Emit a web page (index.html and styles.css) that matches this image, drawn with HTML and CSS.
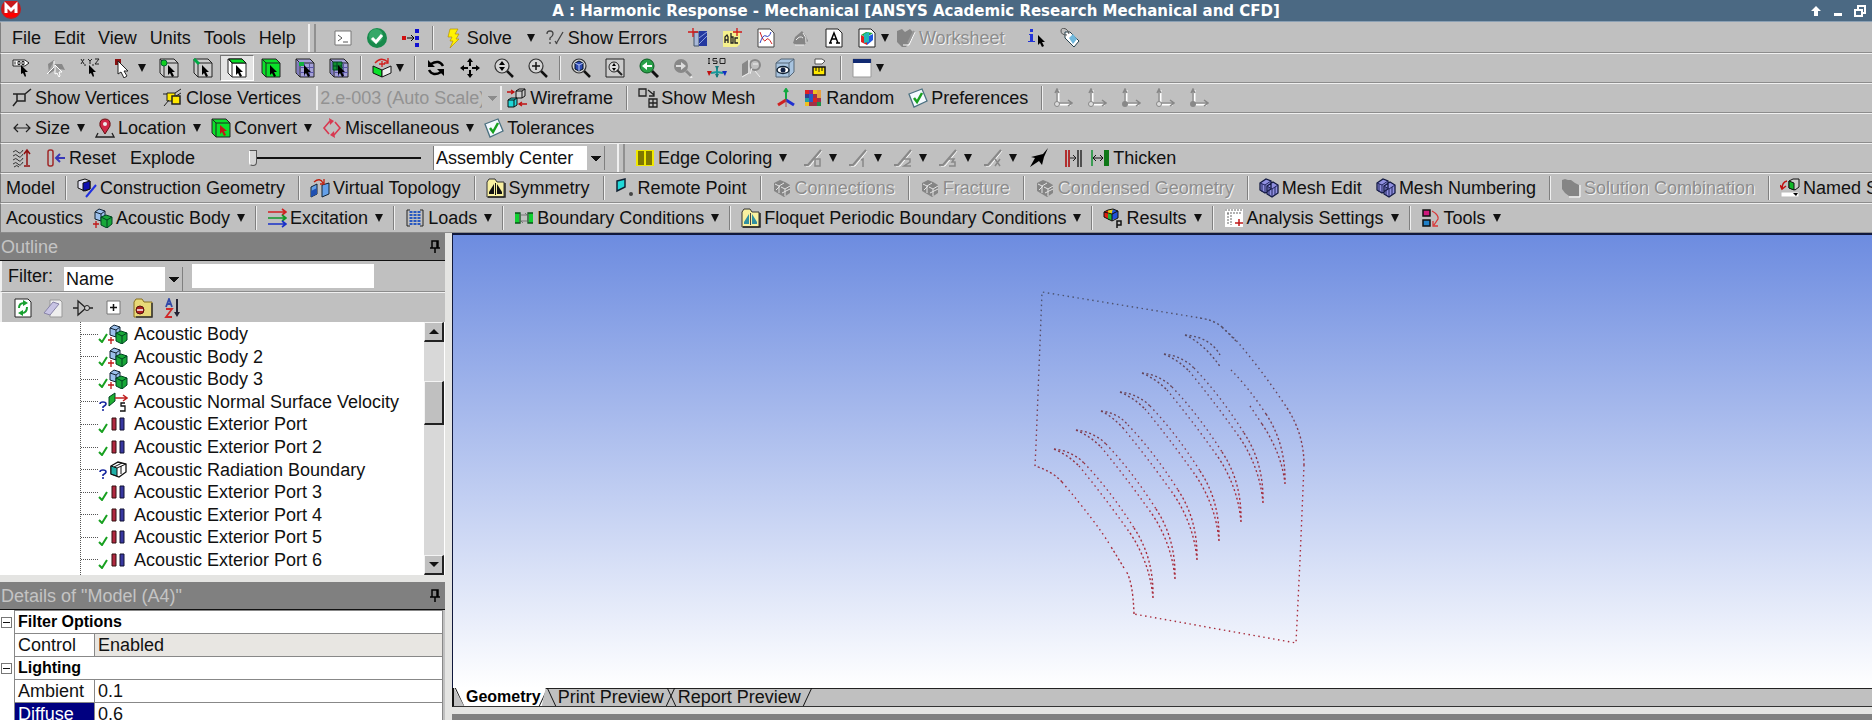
FILE: index.html
```html
<!DOCTYPE html>
<html lang="en">
<head>
    <meta charset="UTF-8">
    <meta name="viewport" content="width=device-width, initial-scale=1.0">
    <title>A : Harmonic Response - Mechanical</title>
    <link rel="stylesheet" href="styles.css">
</head>
<body>
    <!-- Icon definitions -->
    <svg class="defs" aria-hidden="true">
        <symbol id="cursor" viewBox="0 0 20 20"><path d="M9 7v10l2-2 2 4 2-1-2-4h3z" fill="#000"/></symbol>
        <symbol id="logo" viewBox="0 0 22 20"><circle cx="11" cy="8" r="10" fill="#c8191b"/><path d="M4 12h14l-2 4h-10z" fill="#f00"/><path d="M6 12V4l5 5 5-5v8" fill="none" stroke="#fff" stroke-width="3"/></symbol>
        <symbol id="console" viewBox="0 0 20 20"><path d="M2 3h16v14H2z" fill="#fff" stroke="#777"/><path d="M5 7l4 3-4 3M10 14h5" fill="none" stroke="#555"/></symbol>
        <symbol id="ok" viewBox="0 0 20 20"><circle cx="10" cy="10" r="10" fill="#188a4c"/><circle cx="9" cy="8" r="7" fill="#35a868"/><path d="M5 10l4 4 6-7" fill="none" stroke="#fff" stroke-width="3"/></symbol>
        <symbol id="branch" viewBox="0 0 20 20"><path d="M1 8h4v4H1z" fill="#d01010"/><path d="M14 1h4v4h-4zM14 8h4v4h-4zM14 15h4v4h-4z" fill="#1010d0"/><path d="M6 10h6M10 7l3 3-3 3" fill="none" stroke="#000"/></symbol>
        <symbol id="bolt" viewBox="0 0 20 20"><path d="M6 1h8l-3 5h4l-3 5h3L6 20l3-7H6l2-4H4z" fill="#fff200" stroke="#b89000" stroke-width=".7"/></symbol>
        <symbol id="errors" viewBox="0 0 20 20"><path d="M2 6q0-3 3-3t3 3q0 2-3 4v2M5 14v2M11 16l7-12M10 13l2 3" fill="none" stroke="#444" stroke-width="1.3"/></symbol>
        <symbol id="section" viewBox="0 0 20 20"><path d="M6 4h5v14H6z" fill="#a8b8d8" stroke="#456"/><path d="M11 3h8v15h-8z" fill="#2438a0"/><path d="M11 10l8-6M11 16l8-8" stroke="#8aa0e0"/><path d="M5 0v9M0 4h10" stroke="#d01818" stroke-width="1.3"/></symbol>
        <symbol id="note" viewBox="0 0 20 20"><path d="M1 3h17v13l-3 3H1z" fill="#f5f08c"/><path d="M3 15V9l2-2 1 2v6M3 12h3M9 5v10h2V9H9M16 10h-3v5h3" fill="none" stroke="#222" stroke-width="1.300"/><path d="M15 0v8M11 4h9" stroke="#d01818" stroke-width="1.300"/></symbol>
        <symbol id="chart" viewBox="0 0 20 20"><path d="M2 1h12l4 4v14H2z" fill="#fff" stroke="#444"/><path d="M4 4q4 12 6 8t6 4" fill="none" stroke="#d02020"/><path d="M4 15q3-9 6-7t5-4" fill="none" stroke="#3040c0"/></symbol>
        <symbol id="greyrock" viewBox="0 0 20 20"><path d="M3 15L5 9l7-6 4 5 2 5-4 4H6z" fill="#858585"/><path d="M6 12q4-5 7-2M13 5q4 4 3 10M5 17h9" fill="none" stroke="#eee"/></symbol>
        <symbol id="lettera" viewBox="0 0 20 20"><path d="M2 1h12l4 4v14H2z" fill="#fff" stroke="#222"/><path d="M5 15h3M12 15h4M6 15l4-10 4 10M8 11h5" fill="none" stroke="#000" stroke-width="1.500"/></symbol>
        <symbol id="colorpage" viewBox="0 0 20 20"><path d="M2 1h12l4 4v14H2z" fill="#fff" stroke="#222"/><path d="M4 7l6 3v7l-6-3z" fill="#e02020"/><path d="M4 7l5-3 7 1-6 4z" fill="#20a840"/><path d="M10 9l6-3v6l-6 5z" fill="#2058e0"/><path d="M7 6l5-2v10l-5 1z" fill="#20b8b8"/></symbol>
        <symbol id="sheet" viewBox="0 0 20 20"><path d="M1 3l5-2 3 3 5-3 3 3-2 8-5 7H6l-5-5z" fill="#858585"/><path d="M19 4l-6 13H7" fill="none" stroke="#fff"/><path d="M18 3l-6 12" stroke="#999" stroke-width="2"/></symbol>
        <symbol id="info" viewBox="0 0 20 20"><path d="M4 1h3v3H4zM3 6h4v7h2v1H2v-1h2V7H3z" fill="#2233d8"/><use href="#cursor" x="3"/></symbol>
        <symbol id="tag" viewBox="0 0 20 20"><path d="M5 4h5l9 9-5 6-9-9z" fill="#fff" stroke="#26424e"/><path d="M9 10l4-4 4 5-4 5z" fill="#70b8dc"/><path d="M7 7Q1 7 1 3t5-2q2 1 3 5" fill="none" stroke="#555"/></symbol>
        <symbol id="picktag" viewBox="0 0 20 20"><path d="M1 2h12l4 3-4 3H1z" fill="#fff" stroke="#222"/><path d="M3 3.500v3M6 3.500h2v3H6zM10 3.500h2v3h-2z" fill="none" stroke="#222"/><path d="M9 7v9l2-1 2 4 1-1-1-4h3z"/></symbol>
        <symbol id="pickgrey" viewBox="0 0 20 20"><path d="M2 6l6-4v4h8l3 6-6-1v5l-4-4-6 4z" fill="#888"/><path d="M1 16l7-7v-6M9 7v9l2-1 2 4 1-1-1-4h3z" fill="#aaa" stroke="#fff"/></symbol>
        <symbol id="xyz" viewBox="0 0 20 20"><path d="M1 1l3 5M4 1L1 6M8 1l2 2 2-2M10 3v3M15 1h4l-4 5h4M5 6v2M13 6v2" fill="none" stroke="#222"/><path d="M9 7v9l2-1 2 4 1-1-1-4h3z"/></symbol>
        <symbol id="selmode" viewBox="0 0 20 20"><path d="M1 1h6v6H1z" fill="#8a1010"/><path d="M4 3v13l3-2 3 6 3-2-3-5h4z" fill="#fff" stroke="#222"/></symbol>
        <symbol id="cubeshape" viewBox="0 0 20 20"><path d="M1 1h14l4 4v14H5l-4-4z"/><path d="M1 1h14l4 4v14H5l-4-4zM1 1l4 4v14M5 5h14" fill="none" stroke="#222"/></symbol>
        <symbol id="pickvertex" viewBox="0 0 20 20"><use href="#cubeshape" fill="#ccc"/><circle cx="5" cy="5" r="3" fill="#10d020" stroke="#063"/><use href="#cursor"/></symbol>
        <symbol id="pickedge" viewBox="0 0 20 20"><use href="#cubeshape" fill="#ccc"/><path d="M1 1l5 5" stroke="#0a4" stroke-width="3"/><use href="#cursor"/></symbol>
        <symbol id="pickface" viewBox="0 0 20 20"><use href="#cubeshape" fill="#fff"/><path d="M2 1h13l4 4H5z" fill="#0be02a" stroke="#111"/><use href="#cursor"/></symbol>
        <symbol id="pickbody" viewBox="0 0 20 20"><use href="#cubeshape" fill="#0be02a"/><use href="#cursor"/></symbol>
        <symbol id="meshcube" viewBox="0 0 20 20"><use href="#cubeshape" fill="#a4a0d8"/><path d="M5 9.500h14M5 14.500h14M9.500 5v14M14.500 5v14M3 4v13" stroke="#5a56a4"/></symbol>
        <symbol id="picknode" viewBox="0 0 20 20"><use href="#meshcube"/><path d="M4 4h5v4H4z" fill="#10b040"/><use href="#cursor"/></symbol>
        <symbol id="pickelem" viewBox="0 0 20 20"><use href="#meshcube"/><path d="M4 4h9v8H4z" fill="#109030" stroke="#042"/><path d="M4 8h9M8 4v8" stroke="#042"/><use href="#cursor"/></symbol>
        <symbol id="viewrot" viewBox="0 0 20 20"><path d="M1 8l9 4v7l-9-4z" fill="#0be02a" stroke="#111"/><path d="M10 12l9-4v7l-9 4z" fill="#eee" stroke="#111"/><path d="M3 5q6-7 13-1M16 0v5h-4M10 3v6M7 6h6" fill="none" stroke="#d02020" stroke-width="1.300"/></symbol>
        <symbol id="rotate" viewBox="0 0 20 20"><path d="M17 8Q13 1 5 6M3 12q4 7 12 2" fill="none" stroke="#000" stroke-width="2.500"/><path d="M2 2v7h7zM18 18v-7h-7z"/></symbol>
        <symbol id="pan" viewBox="0 0 20 20"><path d="M10 0l3 4H7zM10 20l3-4H7zM0 10l4-3v6zM20 10l-4-3v6z"/><path d="M10 4v4M10 12v4M4 10h4M12 10h4" stroke="#000" stroke-width="2"/></symbol>
        <symbol id="lens" viewBox="0 0 20 20"><path d="M12 12l7 7" stroke="#111" stroke-width="2.500"/><circle cx="8" cy="8" r="7" fill="#d4d4d4" stroke="#333" stroke-width="1.200"/></symbol>
        <symbol id="zoom" viewBox="0 0 20 20"><use href="#lens"/><path d="M8 3l3 4H5zM8 13l3-4H5z"/></symbol>
        <symbol id="boxzoom" viewBox="0 0 20 20"><use href="#lens"/><path d="M8 4v8M4 8h8" stroke="#111" stroke-width="1.500"/></symbol>
        <symbol id="fit" viewBox="0 0 20 20"><use href="#lens"/><path d="M4 5l4-2 4 2v6l-4 2-4-2z" fill="#2c48b0" stroke="#012"/><path d="M4 5l4 2 4-2M8 7v6" fill="none" stroke="#b8c8f8"/></symbol>
        <symbol id="fitbox" viewBox="0 0 20 20"><path d="M1 1h18v18H1z" fill="#ccc" stroke="#222"/><circle cx="9" cy="9" r="5" fill="#ddd" stroke="#222"/><path d="M12 12l5 5" stroke="#222" stroke-width="2"/><path d="M9 5l2 3H7zM9 13l2-3H7z"/></symbol>
        <symbol id="prev" viewBox="0 0 20 20"><path d="M13 13l6 6" stroke="#111" stroke-width="3"/><circle cx="8" cy="8" r="7" fill="#28a048" stroke="#0a5a20"/><path d="M3 8l5-4v3h5v2H8v3z" fill="#fff"/></symbol>
        <symbol id="next" viewBox="0 0 20 20"><path d="M13 14l6 6" stroke="#eee" stroke-width="2"/><path d="M13 13l5 5" stroke="#888" stroke-width="3"/><circle cx="8" cy="8" r="7" fill="#888"/><path d="M13 8L8 4v3H3v2h5v3z" fill="#ddd"/></symbol>
        <symbol id="iso" viewBox="0 0 20 20"><path d="M2 0v6M1 .5h2M1 5.500h2M10 .5H6v2.500h4v2.500H6M13 .5h5v5h-5z" fill="none" stroke="#222"/><path d="M10 8v6M4 15l6-1M16 15l-6-1M10 14v5" stroke="#18989a" stroke-width="2"/><path d="M8 8h4l-2 4zM8 16h4l-2 4z" fill="#18787a"/><path d="M0 13h5l-3 5z" fill="#c01010"/><path d="M20 13h-5l3 5z" fill="#1030c0"/></symbol>
        <symbol id="lookgrey" viewBox="0 0 20 20"><path d="M1 6l6-4v13l-6 3z" fill="#888"/><circle cx="14" cy="7" r="5" fill="none" stroke="#888" stroke-width="2"/><path d="M1 19l7-4V2M9 16l2-6M14 13l5 6M12 6h5" stroke="#eee" fill="none"/></symbol>
        <symbol id="eyecube" viewBox="0 0 20 20"><path d="M1 5l5-4h13v13l-5 5H1z" fill="#a8c4e0" stroke="#567"/><path d="M1 5h13v14M14 5l5-4" fill="none" stroke="#567"/><ellipse cx="8" cy="12" rx="6" ry="3.500" fill="#fff" stroke="#123" stroke-width="1.500"/><circle cx="8" cy="12" r="2.500" fill="#124"/></symbol>
        <symbol id="ruler" viewBox="0 0 20 20"><path d="M6 1h7l3 2-3 3H6z" fill="#fff" stroke="#555"/><path d="M4 9h12v8H4z" fill="#ffe800" stroke="#111" stroke-width="1.500"/><path d="M7 9v4M10 9v5M13 9v4" stroke="#111"/></symbol>
        <symbol id="window" viewBox="0 0 20 20"><path d="M1 1h18v18H1z" fill="#fff" stroke="#999"/><path d="M1 1h18v4H1z" fill="#112a72"/></symbol>
        <symbol id="showvert" viewBox="0 0 20 20"><path d="M5 6h8v7H5zM13 6l6-5M5 13l-4 5M1 6h5" fill="none" stroke="#222" stroke-width="1.500"/></symbol>
        <symbol id="closevert" viewBox="0 0 20 20"><path d="M4 5h8v8H4z" fill="#ffe800" stroke="#222"/><path d="M9 8h8v8H9z" fill="#ffe800" stroke="#222" stroke-width="1.500"/><path d="M1 18l5-6M12 5l6-4M13 8l5-3M0 6h4" stroke="#222"/></symbol>
        <symbol id="wire" viewBox="0 0 20 20"><path d="M9 3l3-2h6v7l-3 2H9zM9 3h6v7M15 3l3-2" fill="#ccc" stroke="#111"/><path d="M1 12l3-2h6v7l-3 2H1zM1 12h6v7M7 12l3-2" fill="#20d8d8" stroke="#111"/><path d="M0 4h6M4 2l3 2-3 2M20 16h-7M15 14l-3 2 3 2" fill="none" stroke="#c01010" stroke-width="1.300"/></symbol>
        <symbol id="showmesh" viewBox="0 0 20 20"><path d="M1 1h7v7H1zM11 11h8v8h-8zM15 11v8M11 15h8M10 2l6 5M16 3v5h-5" fill="none" stroke="#222" stroke-width="1.300"/></symbol>
        <symbol id="triad" viewBox="0 0 20 20"><path d="M10 12V1M8 4l2-3 2 3" fill="none" stroke="#10a840" stroke-width="2"/><path d="M10 12l-8 5" stroke="#d02020" stroke-width="3"/><path d="M10 12l8 5" stroke="#2030d0" stroke-width="3"/><path d="M10 12v7" stroke="#b05050"/></symbol>
        <symbol id="random" viewBox="0 0 20 20"><path d="M2 2h16v16H2z" fill="#a03048"/><path d="M2 2h4v4H2zM10 10h4v4h-4z" fill="#e02020"/><path d="M6 2h4v4H6z" fill="#a02080"/><path d="M10 2h4v4h-4zM2 14h4v4H2z" fill="#f0c020"/><path d="M14 2h4v8h-4z" fill="#e8a040"/><path d="M2 6h4v4H2z" fill="#304090"/><path d="M6 6h4v8H6z" fill="#2858c8"/><path d="M14 14h4v4h-4z" fill="#209048"/><path d="M2 10h4v4H2z" fill="#20a0a0"/></symbol>
        <symbol id="pref" viewBox="0 0 20 20"><path d="M1 6l13-5 5 12-13 6z" fill="#f4faff" stroke="#4a7080" stroke-width="1.300"/><path d="M6 10l3 4 5-9" fill="none" stroke="#18a020" stroke-width="2.500"/></symbol>
        <symbol id="axisgrey" viewBox="0 0 20 20"><path d="M5 15V2M5 16h13" stroke="#fff" stroke-width="3"/><path d="M4 15V2M2 5l2-4 2 4M5 15h13M15 12l4 3-4 3" fill="none" stroke="#888" stroke-width="1.500"/></symbol>
        <symbol id="axisopen" viewBox="0 0 20 20"><use href="#axisgrey"/><circle cx="4" cy="16" r="2.500" fill="#ddd" stroke="#888"/></symbol>
        <symbol id="axisfull" viewBox="0 0 20 20"><use href="#axisgrey"/><circle cx="4" cy="16" r="3" fill="#888"/></symbol>
        <symbol id="size" viewBox="0 0 20 20"><path d="M2 10h16M6 6l-4 4 4 4M14 6l4 4-4 4" fill="none" stroke="#222" stroke-width="1.200"/></symbol>
        <symbol id="pin" viewBox="0 0 20 20"><path d="M3 15l-2 4h18l-2-4" fill="none" stroke="#222" stroke-width="1.300"/><path d="M10 16L5 8q-1-7 5-7t5 7z" fill="#d02848" stroke="#611"/><circle cx="10" cy="6" r="2" fill="#eee"/></symbol>
        <symbol id="convert" viewBox="0 0 20 20"><use href="#cubeshape" fill="#0be02a"/><path d="M9 7v9l2-2 2 4 2-1-2-4h3z" fill="#c01818"/></symbol>
        <symbol id="misc" viewBox="0 0 20 20"><path d="M8 3L2 10l5 6M12 17l6-7-5-6" fill="none" stroke="#d83850" stroke-width="1.600"/><path d="M7 0l5 3-4 4zM13 20l-5-3 4-4z" fill="#d83850"/></symbol>
        <symbol id="explode" viewBox="0 0 20 20"><path d="M1 4q3-3 5 0t5-2M1 8q3-3 5 0t5-2M1 12q3-3 5 0t5-2M1 16q3-3 5 0t5-2M2 19q3-3 5 0" fill="none" stroke="#333"/><path d="M15 17V3M12 6l3-4 3 4M12 18h6" fill="none" stroke="#901010" stroke-width="1.500"/></symbol>
        <symbol id="reset" viewBox="0 0 20 20"><rect x="2" y="2" width="5" height="16" rx="2" fill="none" stroke="#a02828" stroke-width="1.500"/><path d="M19 10h-8M14 6l-4 4 4 4" fill="none" stroke="#3838b8" stroke-width="2"/></symbol>
        <symbol id="edgecol" viewBox="0 0 20 20"><path d="M1 2h18v16H1z" fill="#f0e800"/><path d="M3 3h6v14H3zM11 3h6v14h-6z" fill="#807800"/></symbol>
        <symbol id="edgegrey" viewBox="0 0 20 20"><path d="M3 18h4L19 3" fill="none" stroke="#fff"/><path d="M1 17h4L18 2" fill="none" stroke="#888" stroke-width="2"/></symbol>
        <symbol id="edge0" viewBox="0 0 20 20"><use href="#edgegrey"/><path d="M12 11h5v7h-5z" fill="none" stroke="#888" stroke-width="1.500"/></symbol>
        <symbol id="edge1" viewBox="0 0 20 20"><use href="#edgegrey"/><path d="M13 12l2-1v8" fill="none" stroke="#888" stroke-width="1.500"/></symbol>
        <symbol id="edge2" viewBox="0 0 20 20"><use href="#edgegrey"/><path d="M11 11h6v3l-6 4h7" fill="none" stroke="#888" stroke-width="1.500"/></symbol>
        <symbol id="edge3" viewBox="0 0 20 20"><use href="#edgegrey"/><path d="M11 11h5l-2 3h3v4h-6" fill="none" stroke="#888" stroke-width="1.500"/></symbol>
        <symbol id="edgex" viewBox="0 0 20 20"><use href="#edgegrey"/><path d="M12 11l5 7M17 11l-5 7" fill="none" stroke="#888" stroke-width="1.500"/></symbol>
        <symbol id="direction" viewBox="0 0 20 20"><path d="M1 19l5-9-4-1L14 6l5-6-4 9-2 8-3-4z"/></symbol>
        <symbol id="gap" viewBox="0 0 20 20"><path d="M3 2v17M6 2v17" stroke="#b02020" stroke-width="1.800"/><path d="M15 2v17M18 2v17" stroke="#444" stroke-width="1.800"/><path d="M7 10h6M10 7l3 3-3 3" fill="none" stroke="#222"/></symbol>
        <symbol id="thicken" viewBox="0 0 20 20"><path d="M2 2v16" stroke="#109030" stroke-width="1.500"/><path d="M14 2h5v16h-5z" fill="#0f7818"/><path d="M4 10h9M6 7l-3 3 3 3M10 7l3 3-3 3" fill="none" stroke="#111"/></symbol>
        <symbol id="congeo" viewBox="0 0 20 20"><path d="M1 3l7-2 5 2v8l-5 2-7-3z" fill="#e4e4f4" stroke="#111"/><path d="M6 5l7-2v8l-7 2z" fill="#1010b0" stroke="#111"/><path d="M9 19L19 7" stroke="#2030e0" stroke-width="2"/></symbol>
        <symbol id="virtopo" viewBox="0 0 20 20"><path d="M1 9l6-3v10l-6 3zM12 7l7-2v11l-7 3z" fill="#64a0e8" stroke="#123"/><path d="M1 13l6-3v6l-6 3z" fill="#2050b0"/><path d="M4 4q6-5 9 1M14 1v5h-4" fill="none" stroke="#c02010" stroke-width="1.300"/></symbol>
        <symbol id="symfolder" viewBox="0 0 20 20"><path d="M1 4l2-3h6l2 3h7v15H1z" fill="#f8f0a0" stroke="#333"/><path d="M19 5v14H2" fill="none" stroke="#222" stroke-width="1.500"/></symbol>
        <symbol id="symmetry" viewBox="0 0 20 20"><use href="#symfolder"/><path d="M8 6v10H3v-2zM11 6v10h5v-2z" fill="#111"/><path d="M9.500 5v12" stroke="#111"/></symbol>
        <symbol id="floquet" viewBox="0 0 20 20"><use href="#symfolder"/><path d="M8 6v10H3v-2zM11 6v10h5v-2z" fill="#3090a0"/><path d="M9.500 5v12" stroke="#444"/></symbol>
        <symbol id="remote" viewBox="0 0 20 20"><path d="M2 3l8-2v8l-8 4z" fill="#20d8d8" stroke="#123" stroke-width="1.500"/><circle cx="16" cy="16" r="2" fill="#444"/></symbol>
        <symbol id="meshgrey" viewBox="0 0 20 20"><path d="M2 5l6-3 5 2 5 3v8l-6 4-5-3-5-3z" fill="#858585"/><path d="M3 6l4 2 5-3M7 8v7M9 9l4 2 5-3M13 11v7M4 12l4-4M10 15l8-4" fill="none" stroke="#e4e4e4"/></symbol>
        <symbol id="meshblue" viewBox="0 0 20 20"><path d="M1 5l6-4 5 2v8l-6 4-5-3zM8 8l6-4 5 3v8l-6 4-5-3z" fill="#9090e0" stroke="#111840" stroke-width="1.300"/><path d="M1 5l5 2 6-4M6 7v8M8 8l5 3 6-4M13 11v8M3 6v8M10 9v8M16 9v8" fill="none" stroke="#20245c"/></symbol>
        <symbol id="solcomb" viewBox="0 0 20 20"><path d="M1 2l3-1 3 1h3l4 3 4 2v11H8l-4-3-3-4z" fill="#858585"/><path d="M19 7v12H8" fill="none" stroke="#fff"/></symbol>
        <symbol id="named" viewBox="0 0 20 20"><path d="M9 3l4-2h6v8l-4 3-6-2z" fill="#ccc" stroke="#111"/><path d="M9 3l5 2v7l-5-2z" fill="#10b828" stroke="#111"/><path d="M7 3q-5 1-5 8M0 7l2 4 4-3" fill="none" stroke="#c01010" stroke-width="1.500"/><path d="M1 14h18v5H1z" fill="#fff" stroke="#bbb"/><path d="M13 15h5l-2 3z"/></symbol>
        <symbol id="abody" viewBox="0 0 20 20"><path d="M2 4l4-3 6 2v7l-4 3-6-2z" fill="#9cc0ec" stroke="#123"/><path d="M2 4l6 2 4-3M8 6v7" fill="none" stroke="#123"/><path d="M8 9l5-2 6 2v7l-5 4-6-3z" fill="#18a838" stroke="#042"/><path d="M8 9l6 3 5-3M14 12v8" fill="none" stroke="#042"/><path d="M3 13v7M0 16h6" stroke="#c01818" stroke-width="1.300"/></symbol>
        <symbol id="excite" viewBox="0 0 20 20"><path d="M1 4h17M15 1l4 3-4 3" fill="none" stroke="#d02020" stroke-width="1.600"/><path d="M1 10h17M15 7l4 3-4 3" fill="none" stroke="#109828" stroke-width="1.600"/><path d="M1 16h17M15 13l4 3-4 3" fill="none" stroke="#1830c8" stroke-width="1.600"/></symbol>
        <symbol id="loads" viewBox="0 0 20 20"><path d="M5 2H2v16h3M15 2h3v16h-3" fill="none" stroke="#222"/><path d="M6 3v14M10 3v14M14 3v14" stroke="#2858c0" stroke-width="3" stroke-dasharray="2 1"/></symbol>
        <symbol id="bound" viewBox="0 0 20 20"><path d="M1 5h4v10H1zM15 5h4v10h-4z" fill="#10d030"/><path d="M1 5h5v10H1M19 5h-5v10h5" fill="none" stroke="#0a5018" stroke-width="1.300"/><path d="M7 7h6l-2-2M13 13H7l2 2" fill="none" stroke="#777"/></symbol>
        <symbol id="results" viewBox="0 0 20 20"><path d="M1 4l4-2v9l-4-2z" fill="#e02010"/><path d="M5 2l5-1v9l-5 2z" fill="#e8d010"/><path d="M5 6h4v6H5z" fill="#20b030"/><path d="M10 1l5 2v7l-6 2V4z" fill="#2050d8"/><path d="M1 4l4-2 5-1 5 2v7l-6 3-8-4zM1 4l8 2 6-3M9 6v7" fill="none" stroke="#111"/><path d="M14 20v-7h4v4h-4" fill="none" stroke="#111" stroke-width="1.500"/></symbol>
        <symbol id="analysis" viewBox="0 0 20 20"><path d="M1 1h18v18H1z" fill="#fff"/><path d="M1 2h18M3 5h14M4 5v12M7 7v10" stroke="#666" stroke-dasharray="2 1"/><path d="M15 11v7M11 15h8" stroke="#c01818" stroke-width="1.500"/></symbol>
        <symbol id="tools" viewBox="0 0 20 20"><path d="M2 2h7v6H2z" fill="#d0187c" stroke="#111" stroke-width="1.500"/><path d="M2 12h7v6H2z" fill="#2080c8" stroke="#111" stroke-width="1.500"/><path d="M11 3q7 4 6 8l-4 6M12 13v5h5" fill="none" stroke="#d83838" stroke-width="1.300"/></symbol>
        <symbol id="refresh" viewBox="0 0 20 20"><path d="M2 1h13l3 3v15H2z" fill="#fff" stroke="#222"/><path d="M6 10q0-5 5-5M14 9q0 6-5 6" fill="none" stroke="#18a030" stroke-width="2"/><path d="M10 2l5 3-5 3zM10 18l-5-3 5-3z" fill="#18a030"/></symbol>
        <symbol id="eraser" viewBox="0 0 20 20"><path d="M7 2h10l2 2v15H7z" fill="#eee" stroke="#999"/><path d="M1 15l9-11 6 2-9 11z" fill="#c8c4e4" stroke="#8884a8"/></symbol>
        <symbol id="gate" viewBox="0 0 20 20"><path d="M0 10h5M16 10h4M5 3v14l8-7z" fill="none" stroke="#222" stroke-width="1.300"/><circle cx="14" cy="10" r="2.500" fill="#ccc" stroke="#222"/></symbol>
        <symbol id="expand" viewBox="0 0 20 20"><path d="M4 3h13v13H4z" fill="#fff" stroke="#777"/><path d="M7 9.500h7M10.500 6v7" stroke="#111" stroke-width="1.500"/></symbol>
        <symbol id="folder" viewBox="0 0 20 20"><path d="M1 4l2-3h6l2 3h8v15H1z" fill="#e8d878" stroke="#887020"/><path d="M19 5v14H3" fill="none" stroke="#333" stroke-width="1.500"/><circle cx="7" cy="12" r="4" fill="#b02020" stroke="#511"/><path d="M4 12h6" stroke="#fff" stroke-width="1.500"/></symbol>
        <symbol id="sort" viewBox="0 0 20 20"><path d="M3 9l3-8 3 8M4 6h4" fill="none" stroke="#3048a8" stroke-width="1.800"/><path d="M3 11h6l-6 8h6" fill="none" stroke="#d02828" stroke-width="1.800"/><path d="M14 1v15" stroke="#223" stroke-width="2"/><path d="M11 14h6l-3 5z" fill="#223"/></symbol>
        <symbol id="tick" viewBox="0 0 10 10"><path d="M1 6l3 3 5-8" fill="none" stroke="#18a020" stroke-width="2"/></symbol>
        <symbol id="query" viewBox="0 0 10 10"><path d="M2 3q0-2 3-2t3 2q0 1-3 3v1M5 8v2" fill="none" stroke="#1828a0" stroke-width="1.600"/></symbol>
        <symbol id="velocity" viewBox="0 0 20 20"><path d="M1 5l6-4v8l-6 5z" fill="#20b030" stroke="#042"/><path d="M7 6h11M15 3l4 3-4 3" fill="none" stroke="#c02020" stroke-width="1.500"/><path d="M17 11h-4v3h4v5h-5" fill="none" stroke="#111" stroke-width="1.300"/></symbol>
        <symbol id="port" viewBox="0 0 20 20"><path d="M4 4h4v12H4z" fill="#b02840" stroke="#311"/><path d="M12 4h4v12h-4z" fill="#3838a0" stroke="#113"/></symbol>
        <symbol id="radiate" viewBox="0 0 20 20"><path d="M3 6l7-4 8 2v8l-7 5-8-3z" fill="#fff" stroke="#111" stroke-width="1.300"/><path d="M3 6l6 2v8l-6-2z" fill="#20b0a8" stroke="#111"/><path d="M9 8l9-4M13 6v8M6 7l8-4" fill="none" stroke="#111"/></symbol>
        <symbol id="pushpin" viewBox="0 0 12 14"><path d="M3 1h6v7H3zM1 8h10M6 8v5M8 1v7" fill="none" stroke="#000" stroke-width="1.500"/></symbol>
    </svg>

    <!-- Title bar -->
    <header class="titlebar">
        <svg class="logo"><use href="#logo"/></svg>
        <h1>A : Harmonic Response - Mechanical [ANSYS Academic Research Mechanical and CFD]</h1>
        <div class="window-buttons">
            <button aria-label="Shade"><svg viewBox="0 0 12 12"><path d="M6 1l5 5H8v5H4V6H1z" fill="#fff"/></svg></button>
            <button aria-label="Minimize"><svg viewBox="0 0 12 12"><path d="M2 8h8v3H2z" fill="#fff"/></svg></button>
            <button aria-label="Restore"><svg viewBox="0 0 12 12"><path d="M4 4V1h7v7H9" fill="none" stroke="#fff" stroke-width="2"/><path d="M1 5h7v6H1z" fill="none" stroke="#fff" stroke-width="2"/></svg></button>
        </div>
    </header>

    <!-- Menu and standard toolbar -->
    <div class="toolbar first">
        <nav class="menu">
            <button>File</button><button>Edit</button><button>View</button><button>Units</button><button>Tools</button><button>Help</button>
        </nav>
        <span class="grip"></span>
        <button class="icon-btn" aria-label="Console"><svg><use href="#console"/></svg></button>
        <button class="icon-btn" aria-label="Status"><svg><use href="#ok"/></svg></button>
        <button class="icon-btn" aria-label="Connect"><svg><use href="#branch"/></svg></button>
        <span class="sep"></span>
        <button class="tool"><svg><use href="#bolt"/></svg>Solve<i class="caret far"></i></button>
        <button class="tool"><svg><use href="#errors"/></svg>Show Errors</button>
        <span class="space"></span>
        <button class="icon-btn" aria-label="New Section Plane"><svg><use href="#section"/></svg></button>
        <button class="icon-btn" aria-label="Annotation"><svg><use href="#note"/></svg></button>
        <button class="icon-btn" aria-label="Chart"><svg><use href="#chart"/></svg></button>
        <button class="icon-btn" aria-label="Comment" disabled><svg><use href="#greyrock"/></svg></button>
        <button class="icon-btn" aria-label="Figure"><svg><use href="#lettera"/></svg></button>
        <button class="icon-btn drop" aria-label="Image"><svg><use href="#colorpage"/></svg><i class="caret"></i></button>
        <button class="tool" disabled><svg><use href="#sheet"/></svg>Worksheet</button>
        <span class="space"></span>
        <button class="icon-btn" aria-label="Selection Information"><svg><use href="#info"/></svg></button>
        <button class="icon-btn" aria-label="Tags"><svg><use href="#tag"/></svg></button>
    </div>

    <!-- Selection and view toolbar -->
    <div class="toolbar icons">
        <button class="icon-btn" aria-label="Label"><svg><use href="#picktag"/></svg></button>
        <button class="icon-btn" aria-label="Direction" disabled><svg><use href="#pickgrey"/></svg></button>
        <button class="icon-btn" aria-label="Coordinates"><svg><use href="#xyz"/></svg></button>
        <button class="icon-btn drop" aria-label="Select Mode"><svg><use href="#selmode"/></svg><i class="caret"></i></button>
        <button class="icon-btn" aria-label="Vertex"><svg><use href="#pickvertex"/></svg></button>
        <button class="icon-btn" aria-label="Edge"><svg><use href="#pickedge"/></svg></button>
        <button class="icon-btn pressed" aria-label="Face"><svg><use href="#pickface"/></svg></button>
        <button class="icon-btn" aria-label="Body"><svg><use href="#pickbody"/></svg></button>
        <button class="icon-btn" aria-label="Node"><svg><use href="#picknode"/></svg></button>
        <button class="icon-btn" aria-label="Element"><svg><use href="#pickelem"/></svg></button>
        <span class="sep"></span>
        <button class="icon-btn drop" aria-label="Extend"><svg><use href="#viewrot"/></svg><i class="caret"></i></button>
        <span class="sep"></span>
        <button class="icon-btn" aria-label="Rotate"><svg><use href="#rotate"/></svg></button>
        <button class="icon-btn" aria-label="Pan"><svg><use href="#pan"/></svg></button>
        <button class="icon-btn" aria-label="Zoom"><svg><use href="#zoom"/></svg></button>
        <button class="icon-btn" aria-label="Box Zoom"><svg><use href="#boxzoom"/></svg></button>
        <span class="sep"></span>
        <button class="icon-btn" aria-label="Zoom to Fit"><svg><use href="#fit"/></svg></button>
        <button class="icon-btn" aria-label="Magnifier"><svg><use href="#fitbox"/></svg></button>
        <button class="icon-btn" aria-label="Previous View"><svg><use href="#prev"/></svg></button>
        <button class="icon-btn" aria-label="Next View" disabled><svg><use href="#next"/></svg></button>
        <button class="icon-btn" aria-label="Isometric"><svg><use href="#iso"/></svg></button>
        <button class="icon-btn" aria-label="Look At" disabled><svg><use href="#lookgrey"/></svg></button>
        <button class="icon-btn" aria-label="Manage Views"><svg><use href="#eyecube"/></svg></button>
        <button class="icon-btn" aria-label="Ruler"><svg><use href="#ruler"/></svg></button>
        <span class="sep"></span>
        <button class="icon-btn drop" aria-label="Viewports"><svg><use href="#window"/></svg><i class="caret"></i></button>
    </div>

    <!-- Graphics options -->
    <div class="toolbar">
        <button class="tool"><svg><use href="#showvert"/></svg>Show Vertices</button>
        <span class="space"></span>
        <button class="tool"><svg><use href="#closevert"/></svg>Close Vertices</button>
        <select class="scale" aria-label="Auto Scale" disabled><option>2.e-003 (Auto Scale)</option></select>
        <button class="tool"><svg><use href="#wire"/></svg>Wireframe</button>
        <span class="sep"></span>
        <button class="tool"><svg><use href="#showmesh"/></svg>Show Mesh</button>
        <span class="space"></span>
        <button class="icon-btn" aria-label="Triad"><svg><use href="#triad"/></svg></button>
        <button class="tool"><svg><use href="#random"/></svg>Random</button>
        <span class="space"></span>
        <button class="tool"><svg><use href="#pref"/></svg>Preferences</button>
        <span class="sep"></span>
        <button class="icon-btn" aria-label="Axis 1" disabled><svg><use href="#axisopen"/></svg></button>
        <button class="icon-btn" aria-label="Axis 2" disabled><svg><use href="#axisopen"/></svg></button>
        <button class="icon-btn" aria-label="Axis 3" disabled><svg><use href="#axisfull"/></svg></button>
        <button class="icon-btn" aria-label="Axis 4" disabled><svg><use href="#axisopen"/></svg></button>
        <button class="icon-btn" aria-label="Axis 5" disabled><svg><use href="#axisfull"/></svg></button>
    </div>

    <!-- Selection helper -->
    <div class="toolbar">
        <button class="tool"><svg><use href="#size"/></svg>Size<i class="caret"></i></button>
        <span class="space"></span>
        <button class="tool"><svg><use href="#pin"/></svg>Location<i class="caret"></i></button>
        <span class="space"></span>
        <button class="tool"><svg><use href="#convert"/></svg>Convert<i class="caret"></i></button>
        <span class="space"></span>
        <button class="tool"><svg><use href="#misc"/></svg>Miscellaneous<i class="caret"></i></button>
        <span class="space"></span>
        <button class="tool"><svg><use href="#pref"/></svg>Tolerances</button>
    </div>

    <!-- Explode and edge options -->
    <div class="toolbar">
        <button class="icon-btn start" aria-label="Explode View"><svg><use href="#explode"/></svg></button>
        <button class="tool"><svg><use href="#reset"/></svg>Reset</button>
        <span class="space"></span>
        <label for="explode-factor">Explode</label>
        <input type="range" id="explode-factor" min="0" max="100" value="0">
        <select class="assembly" aria-label="Explode Center"><option>Assembly Center</option></select>
        <span class="grip"></span>
        <button class="tool"><svg><use href="#edgecol"/></svg>Edge Coloring<i class="caret"></i></button>
        <span class="space"></span>
        <button class="edge" aria-label="Free edges"><svg><use href="#edge0"/></svg><i class="caret"></i></button>
        <button class="edge" aria-label="Single edges"><svg><use href="#edge1"/></svg><i class="caret"></i></button>
        <button class="edge" aria-label="Double edges"><svg><use href="#edge2"/></svg><i class="caret"></i></button>
        <button class="edge" aria-label="Triple edges"><svg><use href="#edge3"/></svg><i class="caret"></i></button>
        <button class="edge" aria-label="Multiple edges"><svg><use href="#edgex"/></svg><i class="caret"></i></button>
        <button class="icon-btn" aria-label="Edge Direction"><svg><use href="#direction"/></svg></button>
        <button class="icon-btn" aria-label="Mesh Connection"><svg><use href="#gap"/></svg></button>
        <button class="tool"><svg><use href="#thicken"/></svg>Thicken</button>
    </div>

    <!-- Model context toolbar -->
    <div class="toolbar context">
        <span class="name">Model</span>
        <span class="sep"></span>
        <button class="tool"><svg><use href="#congeo"/></svg>Construction Geometry</button>
        <span class="sep"></span>
        <button class="tool"><svg><use href="#virtopo"/></svg>Virtual Topology</button>
        <span class="sep"></span>
        <button class="tool"><svg><use href="#symmetry"/></svg>Symmetry</button>
        <span class="sep"></span>
        <button class="tool"><svg><use href="#remote"/></svg>Remote Point</button>
        <span class="sep"></span>
        <button class="tool" disabled><svg><use href="#meshgrey"/></svg>Connections</button>
        <span class="sep"></span>
        <button class="tool" disabled><svg><use href="#meshgrey"/></svg>Fracture</button>
        <span class="sep"></span>
        <button class="tool" disabled><svg><use href="#meshgrey"/></svg>Condensed Geometry</button>
        <span class="sep"></span>
        <button class="tool"><svg><use href="#meshblue"/></svg>Mesh Edit</button>
        <span class="space"></span>
        <button class="tool"><svg><use href="#meshblue"/></svg>Mesh Numbering</button>
        <span class="sep"></span>
        <button class="tool" disabled><svg><use href="#solcomb"/></svg>Solution Combination</button>
        <span class="sep"></span>
        <button class="tool"><svg><use href="#named"/></svg>Named Selection</button>
    </div>

    <!-- Acoustics toolbar -->
    <div class="toolbar context">
        <span class="name">Acoustics</span>
        <span class="space"></span>
        <button class="tool"><svg><use href="#abody"/></svg>Acoustic Body<i class="caret"></i></button>
        <span class="sep"></span>
        <button class="tool"><svg><use href="#excite"/></svg>Excitation<i class="caret"></i></button>
        <span class="sep"></span>
        <button class="tool"><svg><use href="#loads"/></svg>Loads<i class="caret"></i></button>
        <span class="sep"></span>
        <button class="tool"><svg><use href="#bound"/></svg>Boundary Conditions<i class="caret"></i></button>
        <span class="sep"></span>
        <button class="tool"><svg><use href="#floquet"/></svg>Floquet Periodic Boundary Conditions<i class="caret"></i></button>
        <span class="sep"></span>
        <button class="tool"><svg><use href="#results"/></svg>Results<i class="caret"></i></button>
        <span class="sep"></span>
        <button class="tool"><svg><use href="#analysis"/></svg>Analysis Settings<i class="caret"></i></button>
        <span class="sep"></span>
        <button class="tool"><svg><use href="#tools"/></svg>Tools<i class="caret"></i></button>
    </div>

    <main class="workspace">
        <aside class="side">
            <section class="outline">
                <h2>Outline <svg><use href="#pushpin"/></svg></h2>
                <div class="filter">
                    <label for="filter-type">Filter:</label>
                    <select id="filter-type"><option>Name</option></select>
                    <input type="text" aria-label="Filter text">
                </div>
                <div class="outline-tools">
                    <button aria-label="Refresh"><svg><use href="#refresh"/></svg></button>
                    <button aria-label="Clear"><svg><use href="#eraser"/></svg></button>
                    <button aria-label="Filter"><svg><use href="#gate"/></svg></button>
                    <button aria-label="Expand All"><svg><use href="#expand"/></svg></button>
                    <button aria-label="Hide Folders"><svg><use href="#folder"/></svg></button>
                    <button aria-label="Sort"><svg><use href="#sort"/></svg></button>
                </div>
                <div class="tree-box">
                    <ul class="tree">
                        <li><svg class="state"><use href="#tick"/></svg><svg><use href="#abody"/></svg>Acoustic Body</li>
                        <li><svg class="state"><use href="#tick"/></svg><svg><use href="#abody"/></svg>Acoustic Body 2</li>
                        <li><svg class="state"><use href="#tick"/></svg><svg><use href="#abody"/></svg>Acoustic Body 3</li>
                        <li><svg class="state"><use href="#query"/></svg><svg><use href="#velocity"/></svg>Acoustic Normal Surface Velocity</li>
                        <li><svg class="state"><use href="#tick"/></svg><svg><use href="#port"/></svg>Acoustic Exterior Port</li>
                        <li><svg class="state"><use href="#tick"/></svg><svg><use href="#port"/></svg>Acoustic Exterior Port 2</li>
                        <li><svg class="state"><use href="#query"/></svg><svg><use href="#radiate"/></svg>Acoustic Radiation Boundary</li>
                        <li><svg class="state"><use href="#tick"/></svg><svg><use href="#port"/></svg>Acoustic Exterior Port 3</li>
                        <li><svg class="state"><use href="#tick"/></svg><svg><use href="#port"/></svg>Acoustic Exterior Port 4</li>
                        <li><svg class="state"><use href="#tick"/></svg><svg><use href="#port"/></svg>Acoustic Exterior Port 5</li>
                        <li><svg class="state"><use href="#tick"/></svg><svg><use href="#port"/></svg>Acoustic Exterior Port 6</li>
                    </ul>
                    <div class="scrollbar">
                        <button aria-label="Scroll up"><i class="up"></i></button>
                        <span class="thumb"></span>
                        <button aria-label="Scroll down"><i class="down"></i></button>
                    </div>
                </div>
            </section>

            <section class="details">
                <h2>Details of "Model (A4)" <svg><use href="#pushpin"/></svg></h2>
                <table>
                    <tr><td class="fold"><span></span></td><th colspan="2">Filter Options</th></tr>
                    <tr><td class="fold"></td><td class="key">Control</td><td class="readonly">Enabled</td></tr>
                    <tr><td class="fold"><span></span></td><th colspan="2">Lighting</th></tr>
                    <tr><td class="fold"></td><td class="key">Ambient</td><td>0.1</td></tr>
                    <tr><td class="fold"></td><td class="key selected">Diffuse</td><td>0.6</td></tr>
                </table>
            </section>
        </aside>

        <section class="graphics">
            <div class="view">
                <svg class="model" viewBox="453 235 1419 453" preserveAspectRatio="xMidYMid meet">
                    <defs>
                        <linearGradient id="edge-color" gradientUnits="userSpaceOnUse" x1="0" y1="290" x2="0" y2="500">
                            <stop offset="0" stop-color="#4a5674"/>
                            <stop offset="0.5" stop-color="#6a4458"/>
                            <stop offset="1" stop-color="#a82c3c"/>
                        </linearGradient>
                    </defs>
                    <g fill="none" stroke="url(#edge-color)">
                        <!-- Duct outline -->
                        <path class="dots" d="M1035 466L1036 445L1042 292L1200 318"/>
                        <path class="dots" d="M1222 327L1235 339Q1262 370 1287 408"/>
                        <path class="dots" d="M1304 465L1300 560L1296 643L1134 614"/>
                        <path class="dots" d="M1062 482Q1096 522 1110 545"/>
                        <path class="dashes" d="M1200 318Q1214 320 1222 327M1222 327l14 14M1287 408Q1304 434 1304 465"/>
                        <path class="dashes" d="M1134 614Q1133 582 1126 571M1124 568L1110 545M1062 482Q1052 471 1035 466"/>
                        <!-- Guide vanes, leading edges -->
                        <path class="dashes" d="M1054 449q18 2 30 14M1054 449q14 6 25 17M1076 430q18 2 30 14M1076 430q14 6 25 17M1101 411q17 2 27 14M1101 411q12 6 22 17M1120 392q18 2 30 14M1120 392q14 6 25 17M1142 373q18 2 30 14M1142 373q14 6 25 17M1164 354q18 2 30 14M1164 354q14 6 25 17M1185 335q25 2 35 20M1185 335q20 9 36 33"/>
                        <!-- Vane sides -->
                        <path class="dots" d="M1084 463q26 27 50 65M1079 466q24 29 51 67M1106 444q26 27 50 65M1101 447q24 29 51 67M1128 425q26 27 50 65M1123 428q24 29 51 67M1150 406q26 27 50 65M1145 409q24 29 51 67M1172 387q26 27 50 65M1167 390q24 29 51 67M1194 368q26 27 50 65M1189 371q24 29 51 67M1231 370q18 18 35 44M1250 406l12 18"/>
                        <!-- Trailing edges -->
                        <path class="dashes" d="M1134 528q20 30 19 70M1130 533q20 30 23 65M1156 509q20 30 19 70M1152 514q20 30 23 65M1178 490q20 30 19 70M1174 495q20 30 23 65M1200 471q20 30 19 70M1196 476q20 30 23 65M1222 452q20 30 19 70M1218 457q20 30 23 65M1244 433q20 30 19 70M1240 438q20 30 23 65M1266 414q20 30 19 70M1262 424q20 30 23 60"/>
                    </g>
                </svg>
            </div>
            <div class="tabs">
                <button class="tab active">Geometry</button>
                <button class="tab">Print Preview</button>
                <button class="tab last">Report Preview</button>
            </div>
            <div class="next-pane"></div>
        </section>
    </main>
</body>
</html>
```
FILE: styles.css
```css
* {
    box-sizing: border-box;
}
body {
    margin: 0;
    height: 100vh;
    display: flex;
    flex-direction: column;
    overflow: hidden;
    background-color: #c0c0c0;
    color: #111;
    font-family: "Liberation Sans", Arial, sans-serif;
    font-size: 18px;
    line-height: 22px;
    white-space: nowrap;
}
button, select, input {
    font: inherit;
    color: inherit;
}
button {
    background: none;
    border: none;
    padding: 0;
}
svg {
    width: 20px;
    height: 20px;
    flex-shrink: 0;
}
.defs {
    position: absolute;
    width: 0;
    height: 0;
}

/* Title bar */
.titlebar {
    display: flex;
    align-items: center;
    height: 22px;
    flex-shrink: 0;
    background-color: #4b6983;
    border-bottom: 1px solid #8ba0b4;
}
.titlebar .logo {
    width: 22px;
}
.titlebar h1 {
    flex: 1;
    margin: 0;
    text-align: center;
    font: bold 15px/20px "DejaVu Sans", sans-serif;
    color: #fff;
}
.window-buttons {
    display: flex;
    gap: 10px;
    width: 62px;
}
.window-buttons button {
    display: flex;
}
.window-buttons svg {
    width: 12px;
    height: 12px;
}

/* Toolbars */
.toolbar {
    display: flex;
    align-items: center;
    height: 30px;
    flex-shrink: 0;
    overflow: hidden;
    padding-left: 11px;
    border-top: 1px solid #f0f0f0;
    border-bottom: 1px solid #8c8c8c;
    border-left: 1px solid #808080;
}
.toolbar.first {
    height: 31px;
    border-top-color: #c0c0c0;
}
.toolbar.icons {
    padding-left: 4px;
}
.toolbar.context {
    padding-left: 5px;
}
.menu {
    display: flex;
    gap: 13px;
}
.tool {
    display: flex;
    align-items: center;
    gap: 3px;
    flex-shrink: 0;
}
.icon-btn, .edge {
    display: flex;
    align-items: center;
    justify-content: center;
    width: 34px;
    height: 26px;
    flex-shrink: 0;
}
.icon-btn.drop {
    width: 45px;
    gap: 2px;
}
.icon-btn.start {
    justify-content: flex-start;
}
.icon-btn.pressed {
    background-color: #e4e4e4;
    border: 1px solid;
    border-color: #777 #fff #fff #777;
}
.edge {
    width: 45px;
    gap: 4px;
}
.sep {
    width: 2px;
    height: 24px;
    margin: 0 10px 0 13px;
    flex-shrink: 0;
    border-left: 1px solid #808080;
    border-right: 1px solid #f0f0f0;
}
.name + .sep {
    margin-left: 10px;
}
.icon-btn + .sep {
    margin-left: 4px;
}
.icons .sep {
    margin-right: 3px;
}
.sep:has(+ .icon-btn) {
    margin-right: 3px;
}
.space {
    width: 14px;
    flex-shrink: 0;
}
/* A drop-down arrow brings its own room */
.tool:has(.caret) + .sep, .tool:has(.caret) + .space {
    margin-left: 10px;
}
.tool:has(.caret) + .space {
    width: 0;
}
.name + .space {
    width: 10px;
}
.grip {
    width: 8px;
    height: 28px;
    margin: 0 10px 0 12px;
    flex-shrink: 0;
    border-left: 2px solid #f0f0f0;
    border-right: 2px solid #909090;
}
.caret {
    margin-left: 4px;
    border: 4px solid transparent;
    border-top: 8px solid #111;
    border-bottom: 0;
}
.icon-btn .caret, .edge .caret {
    margin-left: 2px;
}
.caret.far {
    margin: 0 10px 0 12px;
}
button:disabled {
    color: #8c8c8c;
    text-shadow: 1px 1px 0 #f4f4f4;
}

/* Drop-downs */
select {
    appearance: none;
    height: 24px;
    padding: 0 18px 0 2px;
    border: 0;
    border-right: 1px solid #808080;
    border-radius: 0;
    background-color: #fff;
    background-image: conic-gradient(from 315deg at 50% 100%, #111 90deg, transparent 0), linear-gradient(#c0c0c0, #c0c0c0);
    background-size: 10px 5px, 17px 100%;
    background-position: right 3px center, right center;
    background-repeat: no-repeat;
}
.scale {
    width: 186px;
    margin: 0 5px 0 15px;
    background-color: #c0c0c0;
    background-image: conic-gradient(from 315deg at 50% 100%, #8c8c8c 90deg, transparent 0), linear-gradient(#c0c0c0, #c0c0c0);
    border-left: 2px solid #f0f0f0;
    border-right: 2px solid #f0f0f0;
    color: #929292;
    opacity: 1;
}
.assembly {
    width: 172px;
    margin-left: 12px;
    flex-shrink: 0;
    border-left: 1px solid #777;
}
#explode-factor {
    appearance: none;
    width: 172px;
    height: 16px;
    margin: 0 0 0 54px;
    background: linear-gradient(#111, #111) center / 100% 2px no-repeat;
}
#explode-factor::-webkit-slider-thumb {
    appearance: none;
    width: 8px;
    height: 16px;
    background-color: #d4d4d4;
    border: 1px solid #555;
    border-left-color: #fff;
    border-radius: 0 0 4px 4px;
}

/* Workspace */
.workspace {
    display: flex;
    flex: 1;
    min-height: 0;
}
.side {
    width: 452px;
    flex-shrink: 0;
    border-right: 7px solid #e4e4e2;
    overflow: hidden;
}
.side h2 {
    display: flex;
    align-items: center;
    justify-content: space-between;
    height: 28px;
    margin: 0;
    padding: 1px 3px 0 1px;
    background-color: #808080;
    border-bottom: 1px solid #111;
    font-size: 18px;
    font-weight: normal;
    color: #c4c4c4;
}
.side h2 svg {
    width: 14px;
    height: 14px;
}
.filter, .outline-tools {
    display: flex;
    align-items: center;
    height: 31px;
    border-left: 2px solid #f0f0f0;
    border-bottom: 1px solid #8c8c8c;
    padding-left: 6px;
}
.filter select {
    width: 119px;
    margin-left: 11px;
    align-self: flex-end;
}
.filter input {
    width: 182px;
    height: 24px;
    margin-left: 9px;
    border: 0;
    background-color: #fff;
}
.outline-tools {
    height: 30px;
    gap: 10px;
    border-bottom: 0;
    border-top: 1px solid #f0f0f0;
    padding-left: 11px;
}
.outline-tools button {
    display: flex;
}
.tree-box {
    display: flex;
    height: 253px;
    background-color: #fff;
}
.tree {
    flex: 1;
    display: flex;
    flex-direction: column;
    margin: 0 0 0 80px;
    padding: 1px 0 4px;
    list-style: none;
    border-left: 1px dotted #555;
}
.tree li {
    flex: 1;
    display: flex;
    align-items: center;
}
.tree li::before {
    content: "";
    width: 17px;
    border-top: 1px dotted #555;
}
.tree svg {
    margin-right: 6px;
}
.tree .state {
    width: 10px;
    height: 10px;
    margin: 8px 0 0;
}
.scrollbar {
    display: flex;
    flex-direction: column;
    justify-content: space-between;
    width: 20px;
    margin-right: 1px;
    background-color: #d8d8d8;
}
.scrollbar button, .thumb {
    display: flex;
    align-items: center;
    justify-content: center;
    height: 20px;
    background-color: #c0c0c0;
    border: 1px solid;
    border-color: #f4f4f4 #222 #222 #f4f4f4;
    border-right-width: 2px;
    border-bottom-width: 2px;
}
.thumb {
    height: 44px;
    margin-bottom: 92px;
}
.up, .down {
    border: 5px solid transparent;
    border-bottom: 5px solid #111;
    border-top: 0;
}
.down {
    border-top: 5px solid #111;
    border-bottom: 0;
}

/* Details table */
.details {
    border-top: 7px solid #e4e4e2;
}
.details table {
    width: 443px;
    border-collapse: collapse;
    background-color: #fff;
    line-height: 20px;
}
.details td, .details th {
    height: 23px;
    padding: 0 3px;
    border: 1px solid #888;
    text-align: left;
    font-size: 18px;
}
.details th {
    font-size: 16px;
    color: #000;
}
.details .fold {
    width: 14px;
    padding: 0;
    border-color: transparent #888 transparent transparent;
}
.fold span {
    display: block;
    width: 11px;
    height: 11px;
    border: 1px solid #777;
    background: linear-gradient(#111, #111) center / 7px 1px no-repeat;
}
.details .key {
    width: 80px;
}
.details .readonly {
    background-color: #e8e6e2;
}
.details .selected {
    background-color: #000080;
    color: #fff;
}

/* Graphics window */
.graphics {
    flex: 1;
    display: flex;
    flex-direction: column;
    min-width: 0;
}
.view {
    flex: 1;
    min-height: 0;
    border-top: 2px solid #10183c;
    border-left: 1px solid #10183c;
    background: linear-gradient(#6d8ce0, #fff);
}
.model {
    display: block;
    width: 100%;
    height: 100%;
}
.dots {
    stroke-width: 1.4;
    stroke-dasharray: 1.5 3.5;
}
.dashes {
    stroke-width: 1.4;
    stroke-dasharray: 2 2.5;
}
.tabs {
    display: flex;
    height: 19px;
    border-left: 2px solid #111;
    border-bottom: 1px solid #333;
    background: linear-gradient(#222, #222) top / 100% 1px no-repeat;
}
.tab {
    position: relative;
    padding: 0 2px 0 12px;
    line-height: 18px;
}
.tab::before, .tab::after {
    content: "";
    position: absolute;
    top: 0;
    right: -5px;
    width: 1px;
    height: 18px;
    background-color: #111;
    transform: skewX(-25deg);
}
/* Left slope of a tab that lies behind its neighbour */
.tab::before {
    right: auto;
    left: 5px;
    transform: skewX(25deg);
}
.tab.active {
    padding-right: 5px;
    font-weight: bold;
    font-size: 16px;
    color: #000;
    background: #fff;
    clip-path: polygon(0 0, 100% 0, calc(100% - 4px) 100%, 10px 100%);
}
.tab.active::after {
    right: 2px;
}
.next-pane {
    height: 13px;
    background-color: #808080;
    border-top: 7px solid #e4e4e2;
}
```
